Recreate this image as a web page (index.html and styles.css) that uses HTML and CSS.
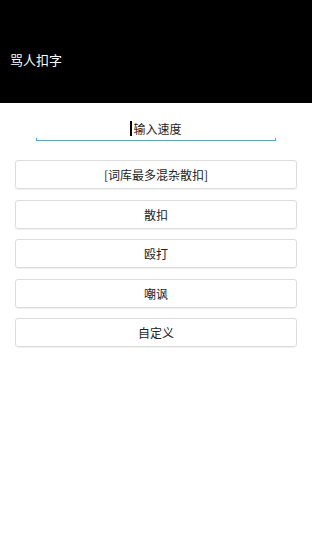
FILE: index.html
```html
<!DOCTYPE html>
<html lang="zh">
<head>
<meta charset="utf-8">
<title>骂人扣字</title>
<link rel="stylesheet" href="styles.css">
</head>
<body>
<div class="screen">
  <header class="appbar">
    <span class="title">骂人扣字</span>
  </header>
  <main class="content">
    <div class="speed-field">
      <div class="speed-text"><span class="caret"></span>输入速度</div>
      <div class="speed-line"></div>
    </div>
    <div class="buttons">
      <div class="btn">[词库最多混杂散扣]</div>
      <div class="btn">散扣</div>
      <div class="btn">殴打</div>
      <div class="btn">嘲讽</div>
      <div class="btn">自定义</div>
    </div>
  </main>
</div>
</body>
</html>
```

FILE: styles.css
```css
html, body {
  margin: 0;
  padding: 0;
  background: #ffffff;
  font-family: "Noto Sans CJK SC", "Noto Sans", sans-serif;
}

.screen {
  width: 312px;
  min-height: 556px;
}

.appbar {
  height: 103px;
  background: #000000;
  box-sizing: border-box;
  padding: 50px 0 0 10px;
}

.title {
  display: block;
  color: #ffffff;
  font-size: 13px;
  line-height: 20px;
}

.content {
  padding: 0 15px;
}

.speed-field {
  width: 240px;
  margin: 16px auto 0;
  display: flex;
  flex-direction: column;
}

.speed-text {
  display: flex;
  justify-content: center;
  align-items: center;
  height: 19px;
  font-size: 12px;
  color: #222222;
}

.caret {
  display: inline-block;
  width: 2px;
  height: 15px;
  background: #000000;
  margin-right: 1px;
}

.speed-line {
  height: 2px;
  border-left: 1px solid #33b5e5;
  border-right: 1px solid #33b5e5;
  border-bottom: 1.5px solid #33b5e5;
}

.buttons {
  margin-top: 19px;
  display: flex;
  flex-direction: column;
  gap: 10.5px;
}

.btn {
  height: 29px;
  box-sizing: border-box;
  border: 1px solid #dcdcdc;
  border-radius: 3px;
  box-shadow: 0 1px 1px rgba(0, 0, 0, 0.06);
  display: flex;
  align-items: center;
  justify-content: center;
  font-size: 12px;
  color: #222222;
}
```
